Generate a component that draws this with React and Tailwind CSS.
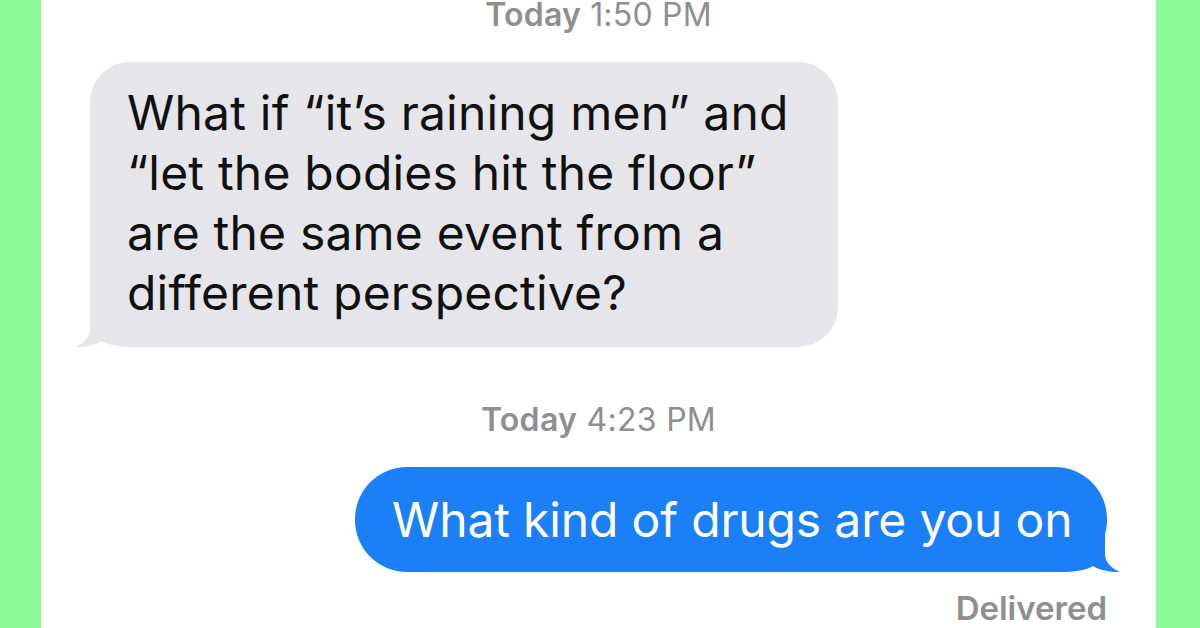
export default function App() {
  return (
    <div className="w-[1200px] h-[628px] flex overflow-hidden bg-white font-['Inter','Liberation_Sans',sans-serif]">
      <div className="w-[41px] shrink-0 bg-[#8dfc98]" />
      <div className="flex-1 flex flex-col bg-white overflow-hidden">
        <div className="self-center mt-[-4px] text-[32px] leading-[38px] text-[#8e8e93] whitespace-nowrap tracking-[0.2px]">
          <span className="font-semibold">Today</span> 1:50 PM
        </div>

        <div className="relative ml-[49px] mt-[28px] w-[748px] h-[285px] rounded-[40px] bg-[#e5e5ea] pl-[37px] pt-[21px] text-[48px] leading-[60px] text-[#111] tracking-[0.2px]">
          <svg className="absolute left-[-17px] bottom-0" width="64" height="48" viewBox="0 0 64 48">
            <path d="M17 0 L17 30 C17 38 11 44 2 48 C13 48 22 46 29 42 C36 46 46 48 64 48 L64 0 Z" fill="#e5e5ea" />
          </svg>
          <div className="relative whitespace-nowrap">What if “it’s raining men” and</div>
          <div className="relative whitespace-nowrap">“let the bodies hit the floor”</div>
          <div className="relative whitespace-nowrap">are the same event from a</div>
          <div className="relative whitespace-nowrap">different perspective?</div>
        </div>

        <div className="self-center mt-[54px] text-[32px] leading-[38px] text-[#8e8e93] whitespace-nowrap tracking-[0.3px]">
          <span className="font-semibold">Today</span> 4:23 PM
        </div>

        <div className="relative self-end mr-[49px] mt-[28px] w-[752px] h-[105px] rounded-[52px] bg-[#1b7ff7] pl-[37px] flex items-center text-[48px] leading-[60px] text-white tracking-[-0.15px]">
          <svg className="absolute right-[-15px] bottom-0" width="64" height="48" viewBox="0 0 64 48">
            <path d="M47 0 L47 30 C47 38 53 44 62 48 C51 48 42 46 35 42 C28 46 18 48 0 48 L0 0 Z" fill="#1b7ff7" />
          </svg>
          <span className="relative whitespace-nowrap">What kind of drugs are you on</span>
        </div>

        <div className="self-end mr-[49px] mt-[17px] text-[33px] leading-[38px] font-semibold text-[#8e8e93] whitespace-nowrap">
          Delivered
        </div>
      </div>
      <div className="w-[44px] shrink-0 bg-[#8dfc98]" />
    </div>
  );
}
